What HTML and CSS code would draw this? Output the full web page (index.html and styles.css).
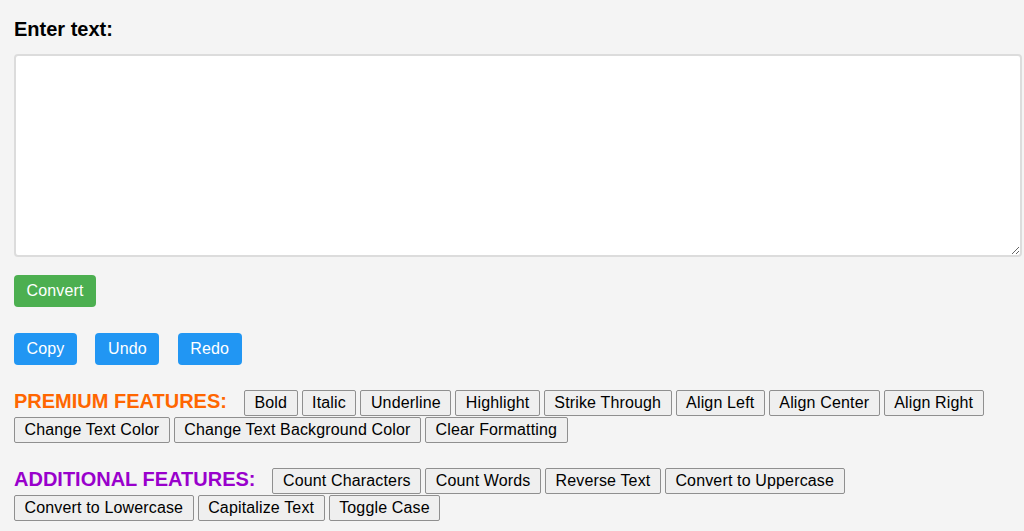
FILE: index.html
```html
<!DOCTYPE html>
<html lang="en">
<head>
<meta charset="utf-8">
<title>Text Converter</title>
<link rel="stylesheet" href="styles.css">
</head>
<body>
<label class="title" for="input">Enter text:</label>
<textarea id="input" class="input"></textarea>
<div class="row convert-row">
  <button class="btn btn-green">Convert</button>
</div>
<div class="row action-row">
  <button class="btn btn-blue">Copy</button>
  <button class="btn btn-blue">Undo</button>
  <button class="btn btn-blue">Redo</button>
</div>
<div class="features premium">
  <span class="feat-label orange">PREMIUM FEATURES:</span>
  <button class="fbtn">Bold</button>
  <button class="fbtn">Italic</button>
  <button class="fbtn">Underline</button>
  <button class="fbtn">Highlight</button>
  <button class="fbtn">Strike Through</button>
  <button class="fbtn">Align Left</button>
  <button class="fbtn">Align Center</button>
  <button class="fbtn">Align Right</button>
  <button class="fbtn">Change Text Color</button>
  <button class="fbtn">Change Text Background Color</button>
  <button class="fbtn">Clear Formatting</button>
</div>
<div class="features additional">
  <span class="feat-label purple">ADDITIONAL FEATURES:</span>
  <button class="fbtn">Count Characters</button>
  <button class="fbtn">Count Words</button>
  <button class="fbtn">Reverse Text</button>
  <button class="fbtn">Convert to Uppercase</button>
  <button class="fbtn">Convert to Lowercase</button>
  <button class="fbtn">Capitalize Text</button>
  <button class="fbtn">Toggle Case</button>
</div>
</body>
</html>
```
FILE: styles.css
```css
html, body {
  margin: 0;
  background: #f4f4f4;
}
body {
  padding: 14px;
  font-family: "Liberation Sans", Arial, sans-serif;
  color: #000;
}
.title {
  display: block;
  font-size: 20px;
  font-weight: bold;
  line-height: 23px;
  margin: 4px 0 13px;
}
.input {
  display: block;
  box-sizing: border-box;
  width: 1008px;
  height: 203px;
  margin: 0;
  border: 2px solid #dcdcdc;
  border-radius: 4px;
  background: #fff;
  resize: vertical;
}
.row {
  display: flex;
  gap: 18.5px;
}
.convert-row {
  margin-top: 18px;
}
.action-row {
  margin-top: 26px;
}
.btn {
  font-family: "Liberation Sans", Arial, sans-serif;
  font-size: 16px;
  line-height: 18px;
  letter-spacing: 0.15px;
  color: #fff;
  border: none;
  border-radius: 4px;
  padding: 7px 12.5px;
  cursor: pointer;
}
.btn-green { background: #4caf50; }
.btn-blue { background: #2196f3; }
.features {
  display: flex;
  flex-wrap: wrap;
  align-items: baseline;
  column-gap: 4px;
  row-gap: 1px;
}
.premium { margin-top: 25px; }
.additional { margin-top: 25px; }
.feat-label {
  font-size: 20px;
  line-height: 23px;
  font-weight: bold;
  margin-right: 13px;
}
.orange { color: #ff6600; }
.purple { color: #9900cc; }
.fbtn {
  font-family: "Liberation Sans", Arial, sans-serif;
  font-size: 16px;
  line-height: 18px;
  letter-spacing: 0.15px;
  color: #000;
  background: #efefef;
  border: 1px solid #8f8f8f;
  border-radius: 2px;
  padding: 3px 9.5px;
  margin: 0;
}
```
